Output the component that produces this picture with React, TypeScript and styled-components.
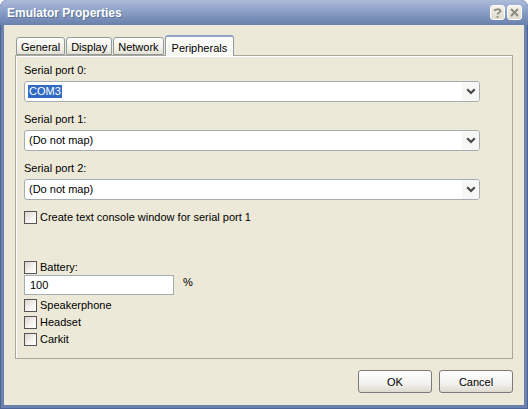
import React, { useState } from "react";
import styled, { createGlobalStyle } from "styled-components";

const GlobalStyle = createGlobalStyle`
  html, body {
    margin: 0;
    background: #ffffff;
  }
  body {
    font-family: "Liberation Sans", Arial, sans-serif;
    font-size: 11px;
    color: #000;
  }
`;

const tabs = ["General", "Display", "Network", "Peripherals"];

const portOptions = [
  { label: "Serial port 0:", value: "COM3", selected: true, top: 8 },
  { label: "Serial port 1:", value: "(Do not map)", selected: false, top: 11 },
  { label: "Serial port 2:", value: "(Do not map)", selected: false, top: 11 },
];

const Chevron = () => (
  <svg width="10" height="7" viewBox="0 0 10 7">
    <path d="M1.2 1.2 L5 5 L8.8 1.2" fill="none" stroke="#4a4a4a" strokeWidth="2.2" />
  </svg>
);

const HelpGlyph = () => (
  <svg width="9" height="10" viewBox="0 0 9 10">
    <path
      d="M1.5 3 C1.5 0.8 7.5 0.6 7.5 3 C7.5 4.8 4.5 4.6 4.5 6.6"
      fill="none"
      stroke="#8d8a80"
      strokeWidth="1.8"
    />
    <rect x="3.6" y="8" width="1.8" height="1.8" fill="#8d8a80" />
  </svg>
);

const CloseGlyph = () => (
  <svg width="9" height="9" viewBox="0 0 9 9">
    <path d="M1 1 L8 8 M8 1 L1 8" stroke="#8d8a80" strokeWidth="2" />
  </svg>
);

const Checkbox = ({ label }: { label: string }) => {
  const [checked, setChecked] = useState(false);
  return (
    <CheckRow onClick={() => setChecked(!checked)}>
      <CheckBoxSquare>{checked ? "✓" : ""}</CheckBoxSquare>
      <span>{label}</span>
    </CheckRow>
  );
};

export default function App() {
  const [active, setActive] = useState(3);

  return (
    <>
      <GlobalStyle />
      <Window>
        <TitleBar>
          <Title>Emulator Properties</Title>
          <TitleButtons>
            <TitleButton>
              <HelpGlyph />
            </TitleButton>
            <TitleButton>
              <CloseGlyph />
            </TitleButton>
          </TitleButtons>
        </TitleBar>

        <Client>
          <TabStrip>
            {tabs.map((t, i) => (
              <Tab key={t} $active={i === active} onClick={() => setActive(i)}>
                {t}
              </Tab>
            ))}
          </TabStrip>

          <Panel>
            {portOptions.map((p) => (
              <React.Fragment key={p.label}>
                <FieldLabel $top={p.top}>{p.label}</FieldLabel>
                <Combo>
                  <ComboValue>
                    <ComboText $selected={p.selected}>{p.value}</ComboText>
                  </ComboValue>
                  <ComboArrow>
                    <Chevron />
                  </ComboArrow>
                </Combo>
              </React.Fragment>
            ))}

            <CheckGroup $top={10}>
              <Checkbox label="Create text console window for serial port 1" />
            </CheckGroup>

            <CheckGroup $top={36}>
              <Checkbox label="Battery:" />
            </CheckGroup>
            <BatteryRow>
              <TextInput defaultValue="100" />
              <Unit>%</Unit>
            </BatteryRow>

            <CheckGroup $top={3}>
              <Checkbox label="Speakerphone" />
              <Checkbox label="Headset" />
              <Checkbox label="Carkit" />
            </CheckGroup>
          </Panel>

          <ButtonRow>
            <DialogButton>OK</DialogButton>
            <DialogButton>Cancel</DialogButton>
          </ButtonRow>
        </Client>
      </Window>
    </>
  );
}

// styles

const Window = styled.div`
  width: 528px;
  height: 409px;
  display: flex;
  flex-direction: column;
  background: #6a81ad;
  border-radius: 7px 7px 0 0;
  box-shadow: inset 0 0 0 1px #4d6594;
  overflow: hidden;
`;

const TitleBar = styled.div`
  height: 25px;
  flex: none;
  display: flex;
  align-items: center;
  justify-content: space-between;
  padding: 0 6px 0 7px;
  background: linear-gradient(#aebcda 0%, #93a6cb 35%, #7b91ba 70%, #6a81ad 100%);
`;

const Title = styled.div`
  font-family: "Liberation Sans", Arial, sans-serif;
  font-size: 12px;
  font-weight: bold;
  color: #ffffff;
  text-shadow: 1px 1px 0 #5f7296;
`;

const TitleButtons = styled.div`
  display: flex;
  gap: 2px;
`;

const TitleButton = styled.div`
  width: 15px;
  height: 15px;
  border: 1px solid #ffffff;
  border-radius: 3px;
  background: linear-gradient(#f4f2ea, #dedbcf);
  display: flex;
  align-items: center;
  justify-content: center;
  box-sizing: border-box;
`;

const Client = styled.div`
  flex: 1;
  display: flex;
  flex-direction: column;
  margin: 0 4px 4px 4px;
  padding: 10px 11px 12px 11px;
  background: #ece9d8;
`;

const TabStrip = styled.div`
  height: 20px;
  display: flex;
  align-items: flex-end;
  gap: 1px;
  padding-left: 1px;
  position: relative;
  z-index: 1;
`;

const Tab = styled.div<{ $active: boolean }>`
  height: ${(p) => (p.$active ? "21px" : "18px")};
  margin-bottom: ${(p) => (p.$active ? "-1px" : "0")};
  box-sizing: border-box;
  padding: ${(p) => (p.$active ? "2px 6px 0 6px" : "1px 4px 0 4px")};
  display: flex;
  align-items: center;
  border: 1px solid #919b9c;
  border-bottom: ${(p) => (p.$active ? "none" : "1px solid #919b9c")};
  border-top: ${(p) => (p.$active ? "2px solid #8fa3c7" : "1px solid #919b9c")};
  border-radius: 3px 3px 0 0;
  background: ${(p) =>
    p.$active ? "#fafaf7" : "linear-gradient(#ffffff, #f1efe6 70%, #e3e0d3)"};
  cursor: default;
`;

const Panel = styled.div`
  flex: 1;
  display: flex;
  flex-direction: column;
  padding: 0 8px;
  border: 1px solid #a9a69b;
  box-shadow: inset 1px 1px 0 #ffffff;
`;

const FieldLabel = styled.div<{ $top: number }>`
  margin-top: ${(p) => p.$top}px;
  height: 13px;
  line-height: 13px;
  margin-bottom: 4px;
`;

const Combo = styled.div`
  width: 456px;
  height: 21px;
  box-sizing: border-box;
  display: flex;
  border: 1px solid #a5acb2;
  border-radius: 3px;
  background: #ffffff;
`;

const ComboValue = styled.div`
  flex: 1;
  display: flex;
  align-items: center;
  padding-left: 3px;
`;

const ComboText = styled.span<{ $selected: boolean }>`
  padding: 0 1px;
  line-height: 13px;
  color: ${(p) => (p.$selected ? "#ffffff" : "#000000")};
  background: ${(p) => (p.$selected ? "#316ac5" : "transparent")};
`;

const ComboArrow = styled.div`
  width: 17px;
  display: flex;
  align-items: center;
  justify-content: center;
  background: #f7f7f5;
  border-radius: 0 2px 2px 0;
`;

const CheckGroup = styled.div<{ $top: number }>`
  margin-top: ${(p) => p.$top}px;
  display: flex;
  flex-direction: column;
  gap: 3px;
`;

const CheckRow = styled.label`
  display: flex;
  align-items: center;
  gap: 3px;
  height: 14px;
  cursor: default;
`;

const CheckBoxSquare = styled.span`
  width: 13px;
  height: 13px;
  box-sizing: border-box;
  border: 1px solid #555555;
  background: linear-gradient(135deg, #d9d6cc, #f6f5f1 60%, #ffffff);
  font-size: 10px;
  line-height: 11px;
  text-align: center;
`;

const BatteryRow = styled.div`
  display: flex;
  align-items: flex-start;
  gap: 9px;
  margin-top: 1px;
`;

const TextInput = styled.input`
  width: 150px;
  height: 20px;
  box-sizing: border-box;
  border: 1px solid #a5acb2;
  padding: 0 5px;
  font-family: "Liberation Sans", Arial, sans-serif;
  font-size: 11px;
  outline: none;
`;

const Unit = styled.span`
  line-height: 15px;
`;

const ButtonRow = styled.div`
  display: flex;
  justify-content: flex-end;
  gap: 7px;
  margin-top: 11px;
`;

const DialogButton = styled.button`
  width: 74px;
  height: 23px;
  border: 1px solid #7b7b7b;
  border-radius: 3px;
  background: linear-gradient(#ffffff, #f3f2ee 60%, #dcd9cf);
  font-family: "Liberation Sans", Arial, sans-serif;
  font-size: 11px;
  color: #000;
  padding: 0;
`;
